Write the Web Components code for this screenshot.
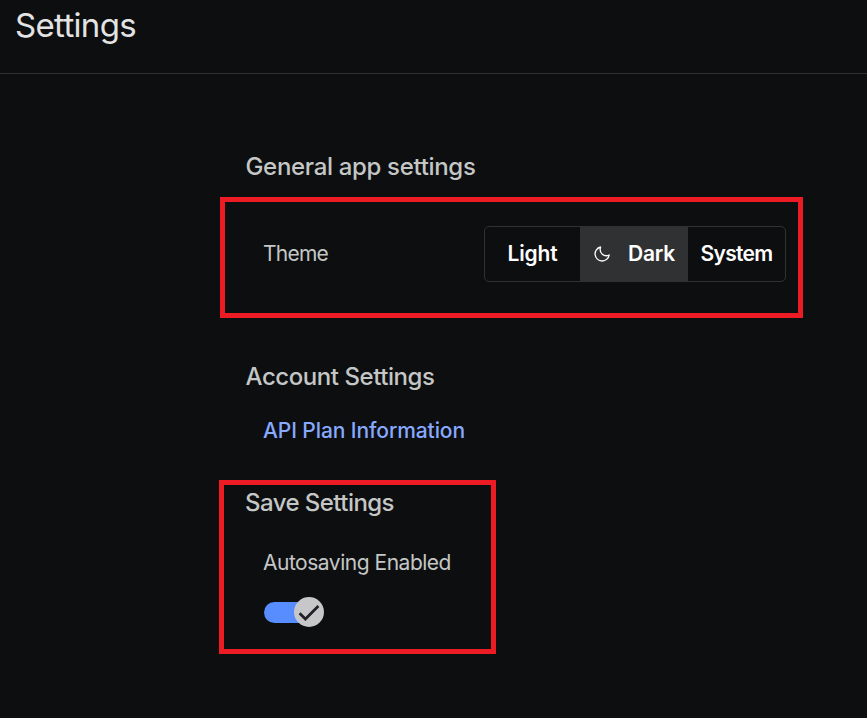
<!DOCTYPE html>
<html lang="en">
<head>
<meta charset="utf-8">
<title>Settings</title>
<style>
html,body{margin:0;height:100%;background:#0d0e10}
body{font-family:Inter,"Open Sans","Liberation Sans",sans-serif;color:#c4c7c5;overflow:hidden}
</style>
</head>
<body>
<settings-page></settings-page>
<script>
const define = (name, html, ready) => {
  const t = document.createElement('template');
  t.innerHTML = html;
  customElements.define(name, class extends HTMLElement {
    constructor() {
      super();
      this.attachShadow({mode: 'open'}).append(t.content.cloneNode(true));
    }
    connectedCallback() { if (ready) ready(this); }
  });
};

/* One line of text whose tracking is tuned to the given measure. */
define('text-line', `<style>
:host{display:block;white-space:nowrap;line-height:30px;font-size:21px}
:host([kind=title]){font-size:33px;line-height:40px;color:#e3e3e3}
:host([kind=heading]){font-size:24px;font-weight:500}
:host([kind=link]){font-weight:500;color:#87a9ff}
:host([kind=button]){font-weight:600;color:#fff}
span{display:inline-block}
</style><span><slot></slot></span>`, el => {
  const span = el.shadowRoot.querySelector('span');
  const want = +el.getAttribute('measure');
  if (!want) return;
  const have = span.getBoundingClientRect().width;
  el.style.letterSpacing = (want - have) / el.textContent.length + 'px';
});

define('page-header', `<style>
:host{display:block;box-sizing:border-box;height:74px;padding:5px 0 0 15px;border-bottom:1px solid #303133}
</style><slot></slot>`);

define('highlight-frame', `<style>
:host{display:block;box-sizing:border-box;border:5px solid #ed1c24}
</style><slot></slot>`);

define('theme-option', `<style>
:host{display:flex;align-items:center;justify-content:center;gap:17px;box-sizing:border-box}
:host([selected]){background:#303133}
</style><slot name="icon"></slot><slot></slot>`);

define('moon-icon', `<style>:host{display:block;width:18px;height:18px}svg{display:block}</style>
<svg width="18" height="18" viewBox="0 0 18 18" fill="none" stroke="#fff" stroke-width="1.3" stroke-linejoin="round"><path d="M7.6 2A7.1 7.1 0 1 0 16.2 10C11.2 12.4 5.6 8.2 7.6 2Z"/></svg>`);

define('theme-picker', `<style>
:host{display:grid;grid-template-columns:95px 108px 97px;box-sizing:border-box;width:302px;height:56px;border:1px solid #303133;border-radius:5px;overflow:hidden}
</style>
<theme-option><text-line kind="button" measure="50">Light</text-line></theme-option>
<theme-option selected><moon-icon slot="icon"></moon-icon><text-line kind="button" measure="47">Dark</text-line></theme-option>
<theme-option><text-line kind="button" measure="72">System</text-line></theme-option>`);

define('toggle-switch', `<style>
:host{display:flex;align-items:center;width:60px;height:30px}
.track{width:45px;height:21px;border-radius:11px 0 0 11px;background:#588dff}
.knob{display:block;flex:none;margin-left:-15px;width:30px;height:30px}
</style><div class="track"></div>
<svg class="knob" viewBox="0 0 30 30"><circle cx="15" cy="15" r="15" fill="#c7c7c9"/><path d="M5.6 16.3L11.4 22L24.4 9" fill="none" stroke="#202124" stroke-width="2.7"/></svg>`);

define('settings-page', `<style>
:host{display:block}
main{display:flex;flex-direction:column;padding:78px 0 0 219px}
.inset{margin-left:26.5px}
.deep{margin-left:44px}
.theme{width:583px;height:121px;margin:15px 0 44px 1px}
.row{display:flex;justify-content:space-between;align-items:center;height:56px;padding:24px 12px 0 38px}
.save{width:277px;height:174px;margin-top:34px;padding-top:3px}
.save .h{margin-left:21px}
.save .l{margin:30px 0 19px 39px}
.save toggle-switch{margin-left:40px}
</style>
<page-header><text-line kind="title" measure="121">Settings</text-line></page-header>
<main>
<text-line class="inset" kind="heading" measure="230">General app settings</text-line>
<highlight-frame class="theme"><div class="row"><text-line measure="65">Theme</text-line><theme-picker></theme-picker></div></highlight-frame>
<text-line class="inset" kind="heading" measure="189">Account Settings</text-line>
<text-line style="margin-top:24px" class="deep" kind="link" measure="202">API Plan Information</text-line>
<highlight-frame class="save">
<text-line class="h" kind="heading" measure="149">Save Settings</text-line>
<text-line class="l" measure="188">Autosaving Enabled</text-line>
<toggle-switch></toggle-switch>
</highlight-frame>
</main>`);
</script>
</body>
</html>
